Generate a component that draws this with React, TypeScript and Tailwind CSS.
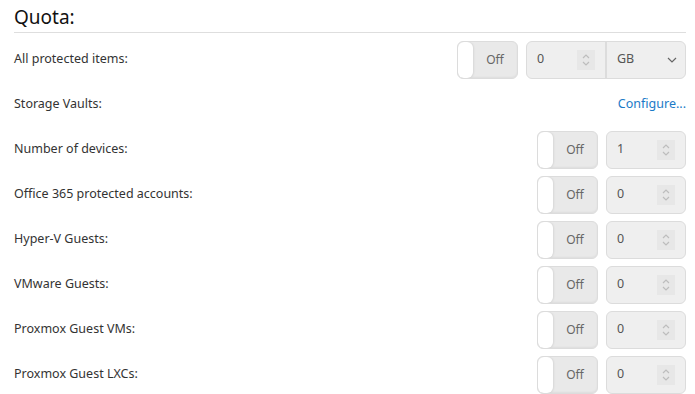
import React from "react";

const font = { fontFamily: '"Noto Sans", "Open Sans", sans-serif' };

const Toggle: React.FC = () => (
  <div className="flex h-[38px] w-[61px] overflow-hidden rounded-[6px] border border-[#dcdcdc] bg-[#e9e9e9] shadow-[inset_0_-1px_2px_rgba(0,0,0,0.05)]">
    <div className="h-full w-[15px] rounded-[6px] bg-white shadow-[1px_0_2px_rgba(0,0,0,0.08)]" />
    <div className="flex flex-1 items-center justify-center text-[12px] text-[#666]">Off</div>
  </div>
);

const Spinner: React.FC = () => (
  <div className="flex h-[20px] w-[18px] items-center justify-center bg-[#e7e7e7]">
    <svg width="10" height="14" viewBox="0 0 10 14" fill="none" stroke="#bdbdbd" strokeWidth="1.2">
      <path d="M2 5 L5 2 L8 5" />
      <path d="M2 9 L5 12 L8 9" />
    </svg>
  </div>
);

const NumberBox: React.FC<{ value: string }> = ({ value }) => (
  <div className="flex h-[38px] w-[80px] items-center justify-between rounded-[6px] border border-[#dcdcdc] bg-[#efefef] pl-[10px] pr-[10px]">
    <span className="text-[12.5px] text-[#555]">{value}</span>
    <Spinner />
  </div>
);

const rows = [
  "Number of devices:",
  "Office 365 protected accounts:",
  "Hyper-V Guests:",
  "VMware Guests:",
  "Proxmox Guest VMs:",
  "Proxmox Guest LXCs:",
];

export default function App() {
  return (
    <div className="h-[394px] w-[695px] bg-white pl-[14px] pr-[9px] text-[#333]" style={font}>
      {/* Header */}
      <div className="flex h-[33px] items-end border-b border-[#dedede] pb-[2px] text-[19px] leading-[26px] text-[#111]">
        Quota:
      </div>

      <div className="mt-[4px] flex flex-col">
        {/* All protected items */}
        <div className="flex h-[45px] items-center justify-between">
          <span className="text-[12.5px]">All protected items:</span>
          <div className="flex items-center gap-[8px]">
            <Toggle />
            <div className="flex h-[38px] w-[160px] rounded-[6px] border border-[#dcdcdc] bg-[#efefef]">
              <div className="flex w-[80px] items-center justify-between border-r-2 border-[#dcdcdc] pl-[10px] pr-[10px]">
                <span className="text-[12.5px] text-[#555]">0</span>
                <Spinner />
              </div>
              <div className="flex flex-1 items-center justify-between pl-[10px] pr-[8px]">
                <span className="text-[12.5px] text-[#555]">GB</span>
                <svg width="10" height="6" viewBox="0 0 10 6" fill="none" stroke="#666" strokeWidth="1.2">
                  <path d="M1 1 L5 5 L9 1" />
                </svg>
              </div>
            </div>
          </div>
        </div>

        {/* Storage Vaults */}
        <div className="flex h-[45px] items-center justify-between">
          <span className="text-[12.5px]">Storage Vaults:</span>
          <span className="text-[12.5px] text-[#1b7ac7]">Configure...</span>
        </div>

        {rows.map((label) => (
          <div key={label} className="flex h-[45px] items-center justify-between">
            <span className="text-[12.5px]">{label}</span>
            <div className="flex items-center gap-[8px]">
              <Toggle />
              <NumberBox value={label === "Number of devices:" ? "1" : "0"} />
            </div>
          </div>
        ))}
      </div>
    </div>
  );
}
